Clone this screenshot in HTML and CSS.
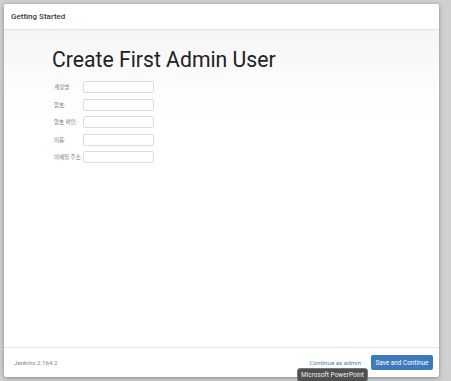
FILE: index.html
```html
<!DOCTYPE html>
<html lang="ko">

<head>
    <meta charset="UTF-8">
    <meta name="viewport" content="width=device-width, initial-scale=1.0">
    <title>Getting Started</title>
    <link rel="stylesheet" href="styles.css">
</head>

<body>
    <div class="dialog">
        <div class="dialog-header">Getting Started</div>

        <div class="dialog-body">
            <h1 class="title">Create First Admin User</h1>
            <form class="admin-form" action="">
                <div class="row">
                    <label for="username">계정명:</label>
                    <input type="text" id="username">
                </div>
                <div class="row">
                    <label for="password1">암호:</label>
                    <input type="password" id="password1">
                </div>
                <div class="row">
                    <label for="password2">암호 확인:</label>
                    <input type="password" id="password2">
                </div>
                <div class="row">
                    <label for="fullname">이름:</label>
                    <input type="text" id="fullname">
                </div>
                <div class="row">
                    <label for="email">이메일 주소:</label>
                    <input type="text" id="email">
                </div>
            </form>
        </div>

        <div class="dialog-footer">
            <span class="version">Jenkins 2.164.2</span>
            <a class="skip-link" href="#">Continue as admin</a>
            <button class="save-btn">Save and Continue</button>
        </div>
    </div>

    <!-- tooltip from the dock -->
    <div class="tooltip">Microsoft PowerPoint</div>
</body>

</html>
```

FILE: styles.css
```css
html, body {
    margin: 0;
    height: 100%;
}

body {
    background-color: #cfcfcf;
    font-family: Roboto, "Noto Sans", "Noto Sans CJK KR", sans-serif;
    padding: 4px 12px 4px 4px;
    box-sizing: border-box;
    overflow: hidden;
    position: relative;
}

/* dialog box */
.dialog {
    height: 373px;
    background-color: #fff;
    border-radius: 2px;
    box-shadow: 0 1px 4px rgba(0, 0, 0, 0.35);
    display: flex;
    flex-direction: column;
}

.dialog-header {
    height: 25px;
    flex-shrink: 0;
    padding: 0 7px;
    display: flex;
    align-items: center;
    font-size: 8px;
    font-weight: 500;
    color: #3a3a3a;
    border-bottom: 1px solid #e6e6e6;
}

.dialog-body {
    flex: 1;
    padding: 0 48px;
    background: linear-gradient(to bottom, #f5f5f5 0px, #fdfdfd 60px, #fff 100px);
}

.title {
    margin: 16px 0 8px 0;
    font-size: 21.2px;
    font-weight: 400;
    color: #222;
    line-height: 27px;
}

.admin-form {
    display: flex;
    flex-direction: column;
    gap: 5.5px;
    padding-left: 2px;
}

.row {
    display: flex;
    align-items: center;
}

.row label {
    width: 29px;
    font-size: 5.5px;
    color: #777;
    white-space: nowrap;
}

.row input {
    width: 71px;
    height: 12px;
    box-sizing: border-box;
    border: 1px solid #dcdcdc;
    border-radius: 2px;
    margin: 0;
    padding: 0;
}

.dialog-footer {
    height: 29px;
    flex-shrink: 0;
    border-top: 1px solid #e2e2e2;
    display: flex;
    align-items: center;
    padding: 0 6px 0 10px;
    font-size: 6.2px;
}

.version {
    color: #888;
    flex: 1;
}

.skip-link {
    color: #4a7fb8;
    text-decoration: none;
    margin-right: 10px;
}

.save-btn {
    background-color: #3e79bb;
    color: #fff;
    border: none;
    border-radius: 2px;
    font-family: inherit;
    font-size: 6.4px;
    height: 15px;
    width: 62px;
    padding: 0;
}

.tooltip {
    position: absolute;
    left: 297px;
    top: 368px;
    width: 71px;
    height: 14px;
    box-sizing: border-box;
    background-color: #4f4f4f;
    color: #eee;
    border: 1px solid #777;
    border-radius: 3px;
    font-size: 6.5px;
    display: flex;
    align-items: center;
    justify-content: center;
}
```
